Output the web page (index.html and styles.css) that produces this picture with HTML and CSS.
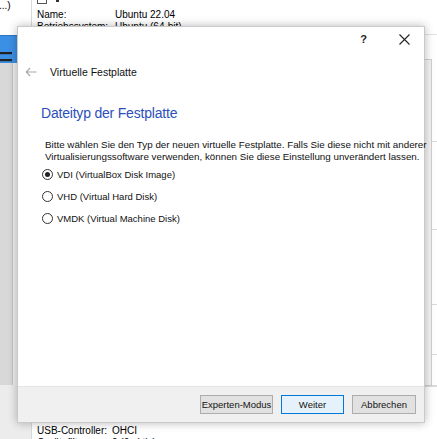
FILE: index.html
```html
<!DOCTYPE html>
<html lang="de">
<head>
<meta charset="utf-8">
<title>Virtuelle Festplatte</title>
<link rel="stylesheet" href="styles.css">
</head>
<body>
<div class="app">
  <aside class="left">
    <div class="left-top"><span class="trunc">...)</span></div>
    <div class="left-sel">
      <svg class="ham" width="14" height="20" viewBox="0 0 14 20"><rect x="0" y="3" width="12" height="2.2" fill="#222"/><rect x="0" y="10" width="12" height="2.2" fill="#222"/><rect x="0" y="17" width="12" height="2.2" fill="#222"/></svg>
    </div>
    <div class="left-tools"><div class="tools-a"></div><div class="tools-b"></div></div>
    <div class="left-bottom"></div>
  </aside>
  <main class="right">
    <div class="general">
      <div class="icon-row"><span class="vm-icon"></span><span class="vm-dot"></span></div>
      <div class="prop"><span class="k">Name:</span><span>Ubuntu 22.04</span></div>
      <div class="prop"><span class="k">Betriebssystem:</span><span>Ubuntu (64-bit)</span></div>
    </div>
    <div class="details">
      <div class="details-box"></div>
      <div class="details-strip"><div class="ds" style="height:83px"></div><div class="ds" style="height:89px"></div><div class="ds" style="height:75px"></div><div class="ds" style="height:50px"></div><div class="ds" style="height:30px"></div></div>
    </div>
    <div class="bottom-props">
      <div class="prop"><span class="k">USB-Controller:</span><span>OHCI</span></div>
      <div class="prop"><span class="k">Gerätefilter:</span><span>0 (0 aktiv)</span></div>
    </div>
  </main>
</div>

<div class="dialog">
  <div class="titlebar">
    <span class="help">?</span>
    <svg class="close" width="11" height="11" viewBox="0 0 11 11"><path d="M0.5 0.5 L10.5 10.5 M10.5 0.5 L0.5 10.5" stroke="#222" stroke-width="1.1" fill="none"/></svg>
  </div>
  <div class="wiz-head">
    <svg class="back" width="12" height="10" viewBox="0 0 12 10"><path d="M11.5 5 H1.2 M5.2 1 L1.2 5 L5.2 9" stroke="#a8a8a8" stroke-width="1.1" fill="none"/></svg>
    <span class="wiz-title">Virtuelle Festplatte</span>
  </div>
  <div class="content">
    <h1 class="heading">Dateityp der Festplatte</h1>
    <p class="desc">Bitte wählen Sie den Typ der neuen virtuelle Festplatte. Falls Sie diese nicht mit anderer<br>Virtualisierungssoftware verwenden, können Sie diese Einstellung unverändert lassen.</p>
    <div class="options">
      <label class="opt"><span class="radio checked"></span>VDI (VirtualBox Disk Image)</label>
      <label class="opt"><span class="radio"></span>VHD (Virtual Hard Disk)</label>
      <label class="opt"><span class="radio"></span>VMDK (Virtual Machine Disk)</label>
    </div>
  </div>
  <div class="footer">
    <button class="btn b1">Experten-Modus</button>
    <button class="btn primary b2">Weiter</button>
    <button class="btn b3">Abbrechen</button>
  </div>
</div>
</body>
</html>
```

FILE: styles.css
```css
html, body {
  margin: 0;
  padding: 0;
}
body {
  width: 437px;
  height: 439px;
  overflow: hidden;
  position: relative;
  background: #ffffff;
  font-family: "Liberation Sans", Arial, sans-serif;
  font-size: 10px;
  color: #000;
}

/* ---------- background main window ---------- */
.app {
  display: grid;
  grid-template-columns: 32px 1fr;
  height: 439px;
}
.left {
  display: flex;
  flex-direction: column;
  border-right: 1px solid #d9d9d9;
  background: #ececec;
}
.left-top {
  height: 35px;
  background: #ffffff;
}
.trunc {
  display: block;
  line-height: 11px;
  margin-left: -1px;
}
.left-sel {
  height: 28px;
  background: #3b8fe4;
  border-top: 1px solid #2f74c4;
  box-sizing: border-box;
}
.ham {
  display: block;
  margin-top: 13px;
}
.left-tools {
  display: flex;
  height: 322px;
}
.tools-a {
  width: 12px;
  background: #d8d8d8;
  border-right: 1px solid #c4c4c4;
}
.tools-b {
  width: 5px;
  background: #f0f0f0;
}
.left-bottom {
  flex: 1;
  background: #ececec;
}

.right {
  display: flex;
  flex-direction: column;
  padding-left: 5px;
  background: #ffffff;
}
.general {
  height: 35px;
  border-bottom: 1px solid #e2e2e2;
  box-sizing: border-box;
}
.icon-row {
  height: 9px;
  display: flex;
  gap: 9px;
  align-items: flex-start;
}
.vm-icon {
  width: 8px;
  height: 3px;
  border: 1px solid #555;
  border-top: none;
}
.vm-dot {
  width: 3px;
  height: 2px;
  background: #333;
}
.prop {
  display: flex;
  line-height: 12px;
}
.prop .k {
  width: 78px;
}
.details {
  margin-top: 24px;
  height: 327px;
  display: flex;
  justify-content: flex-end;
}
.details-box {
  width: 6px;
  border: 1px solid #cfcfcf;
  border-left: none;
  background: #f4f4f4;
}
.details-strip {
  width: 5px;
  display: flex;
  flex-direction: column;
}
.ds {
  border-bottom: 1px solid #dadada;
}
.bottom-props {
  border-top: 1px solid #dcdcdc;
  padding-top: 38px;
}
.bottom-props .prop .k {
  width: 75px;
}

/* ---------- dialog ---------- */
.dialog {
  position: absolute;
  left: 17px;
  top: 26px;
  width: 408px;
  height: 397px;
  box-sizing: border-box;
  background: #ffffff;
  border: 1px solid #c9c9c9;
  box-shadow: 0 0 9px rgba(0, 0, 0, 0.28);
  display: flex;
  flex-direction: column;
}
.titlebar {
  height: 24px;
  display: flex;
  justify-content: flex-end;
  align-items: center;
  padding-right: 14px;
  gap: 32px;
}
.help {
  font-size: 11px;
  font-weight: bold;
  color: #222;
}
.close {
  display: block;
}
.wiz-head {
  height: 42px;
  display: flex;
  align-items: center;
  padding-left: 7px;
  gap: 13px;
}
.back {
  display: block;
}
.wiz-title {
  font-size: 10.5px;
  color: #111;
}
.content {
  flex: 1;
  padding-left: 23px;
}
.heading {
  margin: 11px 0 0 0;
  font-size: 14px;
  letter-spacing: -0.2px;
  font-weight: normal;
  color: #2c50bb;
  line-height: 18px;
}
.desc {
  margin: 17px 0 0 4px;
  line-height: 12px;
  font-size: 9.8px;
  white-space: nowrap;
  color: #111;
}
.options {
  margin-top: 5px;
  display: flex;
  flex-direction: column;
  gap: 10px;
}
.opt {
  display: flex;
  align-items: center;
  gap: 4px;
  height: 12px;
  font-size: 9.5px;
  color: #111;
  padding-left: 1px;
}
.radio {
  width: 11px;
  height: 11px;
  box-sizing: border-box;
  border: 1px solid #333;
  border-radius: 50%;
  display: flex;
  align-items: center;
  justify-content: center;
}
.radio.checked::after {
  content: "";
  width: 5px;
  height: 5px;
  border-radius: 50%;
  background: #222;
}
.footer {
  height: 36px;
  box-sizing: border-box;
  background: #f0f0f0;
  border-top: 1px solid #e4e4e4;
  display: flex;
  justify-content: flex-end;
  align-items: center;
  padding-right: 8px;
  gap: 8px;
  padding-bottom: 1px;
}
.btn {
  height: 19px;
  box-sizing: border-box;
  border: 1px solid #adadad;
  background: #e1e1e1;
  font-family: "Liberation Sans", Arial, sans-serif;
  font-size: 9.5px;
  color: #111;
  padding: 0;
}
.btn.primary {
  border-color: #0078d7;
  background: #e5f1fb;
}
.b1 { width: 73px; }
.b2 { width: 63px; }
.b3 { width: 64px; }
```
